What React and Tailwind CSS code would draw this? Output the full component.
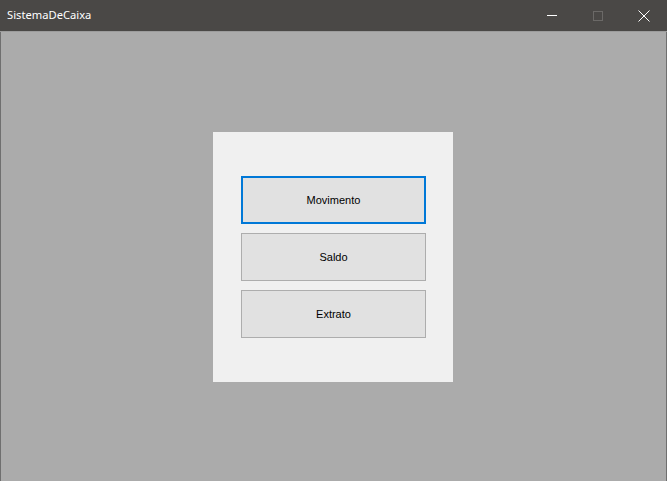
import React from 'react';

export default function App() {
  const buttons = ['Movimento', 'Saldo', 'Extrato'];

  return (
    <div className="w-[667px] h-[481px] flex flex-col bg-[#ababab] overflow-hidden" style={{ fontFamily: '"Liberation Sans", Arial, sans-serif' }}>
      {/* title bar */}
      <div className="h-[31px] bg-[#4a4846] flex items-center shrink-0">
        <span className="pl-[7px] text-[11.2px] text-white" style={{ fontFamily: '"Noto Sans", "Open Sans", sans-serif' }}>
          SistemaDeCaixa
        </span>
        <div className="ml-auto flex h-full">
          <div className="w-[46px] h-full flex items-center justify-center">
            <div className="w-[10px] h-px bg-white" />
          </div>
          <div className="w-[46px] h-full flex items-center justify-center">
            <div className="w-[10px] h-[10px] border border-[#6b6967]" />
          </div>
          <div className="w-[46px] h-full flex items-center justify-center">
            <svg width="12" height="12" viewBox="0 0 12 12">
              <path d="M0.5 0.5 L11.5 11.5 M11.5 0.5 L0.5 11.5" stroke="#ffffff" strokeWidth="1" />
            </svg>
          </div>
        </div>
      </div>
      <div className="h-px bg-[#9c9c9c] shrink-0" />

      {/* client area */}
      <div className="flex-1 border-x border-[#6f6f6f] pl-[212px] pt-[100px]">
        <div className="w-[240px] h-[250px] bg-[#f0f0f0] pl-[28px] pt-[44px] flex flex-col gap-[9px]">
          {buttons.map((label, i) => (
            <button
              key={label}
              className={`w-[185px] h-[48px] bg-[#e1e1e1] text-[11px] text-black flex items-center justify-center pt-px ${
                i === 0 ? 'border-2 border-[#0078d7]' : 'border border-[#adadad]'
              }`}
            >
              {label}
            </button>
          ))}
        </div>
      </div>
    </div>
  );
}
